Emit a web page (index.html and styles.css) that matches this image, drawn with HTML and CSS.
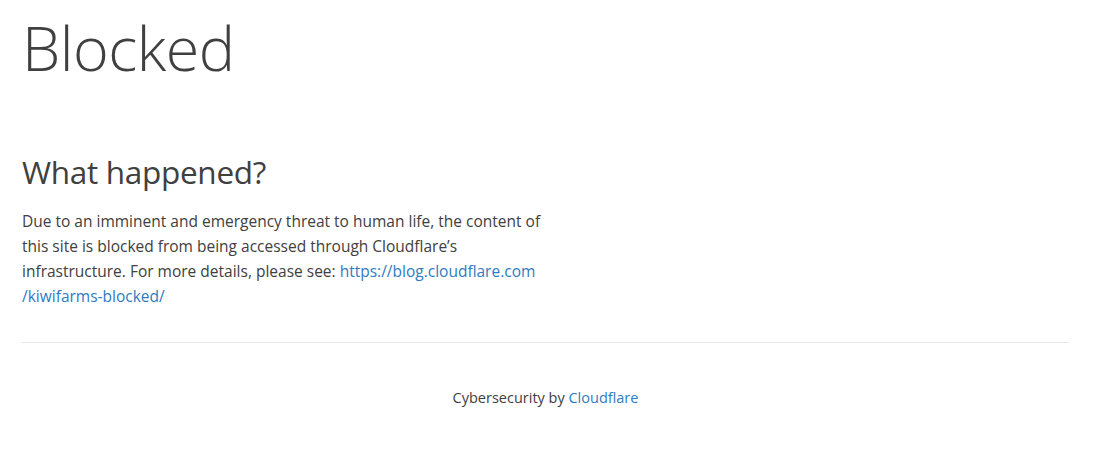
FILE: index.html
```html
<!DOCTYPE html>
<html lang="en">
  <head>
    <meta charset="UTF-8" />
    <meta name="viewport" content="width=device-width, initial-scale=1.0" />
    <title>Blocked</title>
    <link rel="stylesheet" href="styles.css">
  </head>
  <body>
    <div class="page">
      <h1 class="title">Blocked</h1>

      <section class="details">
        <h2>What happened?</h2>
        <p>
          Due to an imminent and emergency threat to human life, the content of
          this site is blocked from being accessed through Cloudflare’s
          infrastructure. For more details, please see:
          <a href="#"><span class="nowrap">https://blog.cloudflare.com</span><wbr><span class="nowrap">/kiwifarms-blocked/</span></a>
        </p>
      </section>

      <div class="footer">
        Cybersecurity by <a href="#">Cloudflare</a>
      </div>
    </div>
  </body>
</html>
```

FILE: styles.css
```css
body {
  font-family: "Open Sans", "Noto Sans", Arial, sans-serif;
  color: #404040;
  background-color: #fff;
  margin: 0;
  padding: 0;
}

a {
  color: #2f7bbf;
  text-decoration: none;
}

.nowrap {
  white-space: nowrap;
}

.page {
  padding: 0 26px 0 22px;
}

.title {
  font-size: 61px;
  font-weight: 300;
  line-height: 1;
  margin: 0;
  padding-top: 17px;
  letter-spacing: -0.5px;
}

.details {
  margin-top: 75px;
  padding-bottom: 33px;
  border-bottom: 1px solid #e8e8e8;
}

.details h2 {
  font-size: 31.5px;
  font-weight: 400;
  line-height: 1.2;
  margin: 0 0 18px;
  letter-spacing: -0.3px;
}

.details p {
  width: 540px;
  font-size: 15.5px;
  line-height: 25px;
  margin: 0;
}

.footer {
  text-align: center;
  font-size: 14.5px;
  line-height: 25px;
  padding-top: 42px;
}
```
